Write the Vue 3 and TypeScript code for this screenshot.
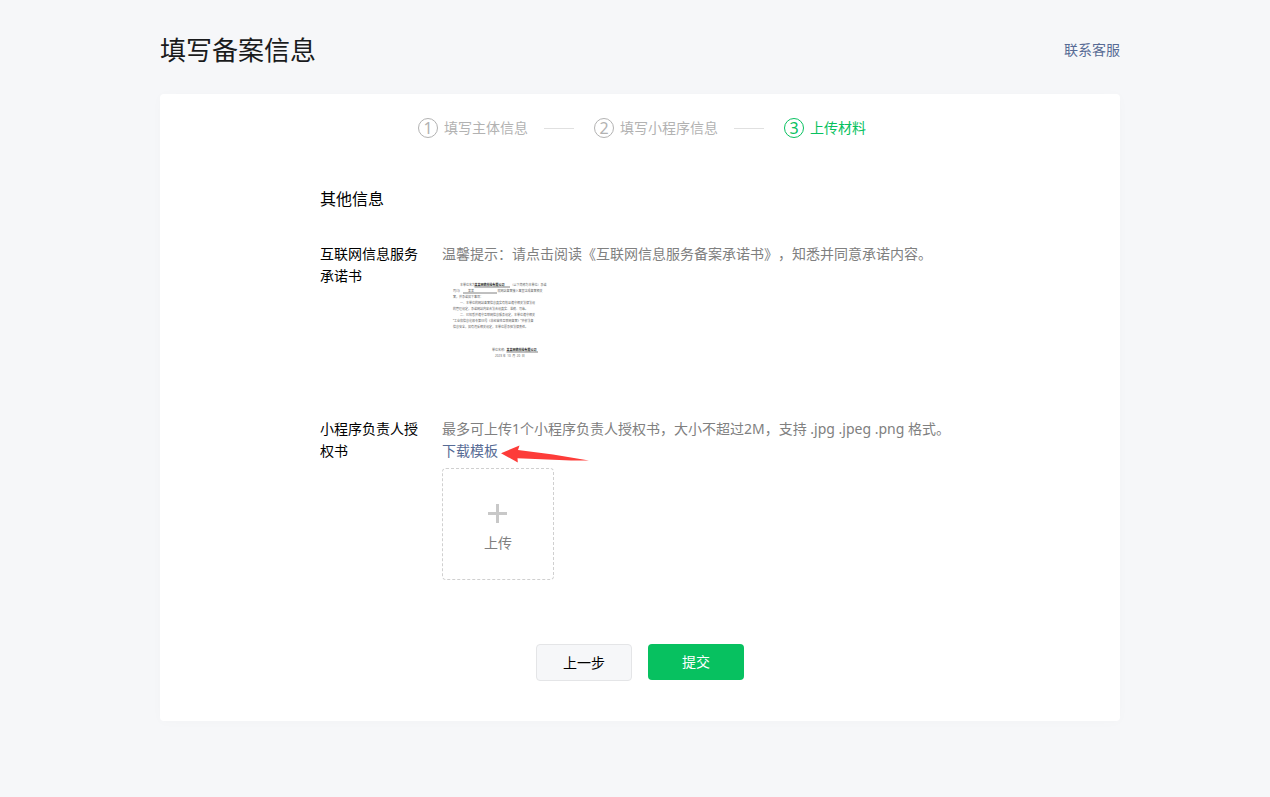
<script setup lang="ts">
interface Step {
  title: string
  active: boolean
}

const steps: Step[] = [
  { title: '填写主体信息', active: false },
  { title: '填写小程序信息', active: false },
  { title: '上传材料', active: true },
]

interface LetterRun {
  x: number
  y: number
  text: string
  bold?: boolean
}

const letter: LetterRun[] = [
  { x: 72, y: 44, text: '本单位名为' },
  { x: 130, y: 44, text: '某某网络科技有限公司', bold: true },
  { x: 274, y: 44, text: '（以下简称为本单位）承诺' },
  { x: 44, y: 68, text: '司)与' },
  { x: 104, y: 68, text: '某某' },
  { x: 222, y: 68, text: '就网站备案接入事宜达成备案相关' },
  { x: 44, y: 92, text: '案，并承诺如下事项：' },
  { x: 72, y: 116, text: '一、本单位的网站备案信息真实有效且遵守相关法律法规' },
  { x: 44, y: 140, text: '的管理规定，承诺网站内容合法合规真实、准确、可靠。' },
  { x: 72, y: 164, text: '二、已知悉并遵守互联网信息服务规定，本单位遵守相关' },
  { x: 44, y: 188, text: '“工业和信息化部令第33号《非经营性互联网备案》”并依法备' },
  { x: 44, y: 212, text: '信息安全，如有违反相关规定，本单位愿承担法律责任。' },
  { x: 200, y: 304, text: '单位名称:' },
  { x: 258, y: 304, text: '某某网络科技有限公司', bold: true },
  { x: 212, y: 328, text: '2023 年  10  月  20  日' },
]
</script>

<template>
  <div class="page">
    <header class="header">
      <h1>填写备案信息</h1>
      <a href="#">联系客服</a>
    </header>

    <main class="card">
      <ol class="steps">
        <li v-for="(step, i) in steps" :key="step.title" class="step" :class="{ active: step.active }">
          <span class="num">{{ i + 1 }}</span>
          <span class="step-title">{{ step.title }}</span>
        </li>
      </ol>

      <form class="form" @submit.prevent>
        <h2>其他信息</h2>

        <div class="row">
          <span class="label">互联网信息服务承诺书</span>
          <div class="content">
            <p>温馨提示：请点击阅读《互联网信息服务备案承诺书》，知悉并同意承诺内容。</p>
            <svg class="letter" viewBox="0 0 448 448" role="img" aria-label="承诺书">
              <text
                v-for="run in letter"
                :key="run.x + '-' + run.y"
                :x="run.x"
                :y="run.y"
                :class="{ bold: run.bold }"
              >{{ run.text }}</text>
              <path d="M130 48H272M84 72H220M258 308H384" />
            </svg>
          </div>
        </div>

        <div class="row">
          <label class="label" for="authorization">小程序负责人授权书</label>
          <div class="content">
            <p>最多可上传1个小程序负责人授权书，大小不超过2M，支持 .jpg .jpeg .png 格式。</p>
            <div class="download">
              <a href="#">下载模板</a>
              <svg class="arrow" viewBox="0 0 90 18" aria-hidden="true">
                <path d="M0 8.2L18.5 0.5L17 5L52 9.5L88 15.6L70 15.5L16.5 13.2L16.8 17.4Z" />
              </svg>
            </div>
            <label class="upload">
              <input id="authorization" type="file" accept=".jpg,.jpeg,.png" />
              <svg class="plus" viewBox="0 0 20 20" aria-hidden="true">
                <path d="M8 0h3v8h8v3h-8v8h-3v-8h-8v-3h8z" />
              </svg>
              <span>上传</span>
            </label>
          </div>
        </div>

        <div class="actions">
          <button type="button" class="btn">上一步</button>
          <button type="submit" class="btn primary">提交</button>
        </div>
      </form>
    </main>
  </div>
</template>

<style>
body {
  margin: 0;
  background: #f6f7f9;
}
</style>

<style scoped>
.page {
  max-width: 960px;
  margin: 0 auto;
  padding: 0 0 76px 10px;
  font: 14px/22px "Noto Sans", "Noto Sans CJK SC", sans-serif;
  text-spacing-trim: space-all;
  color: #000;
}
h1, h2, p, ol {
  margin: 0;
  padding: 0;
  font-weight: 400;
}
a {
  color: #576b95;
  text-decoration: none;
}
.header {
  display: flex;
  align-items: center;
  justify-content: space-between;
  padding: 32px 0 26px;
}
h1 {
  font-size: 26px;
  line-height: 36px;
  color: #1a1b1c;
}
.card {
  padding: 24px 0 40px;
  background: #fff;
  border-radius: 4px;
  box-shadow: 0 1px 12px rgba(0, 0, 0, 0.02);
}
.steps {
  display: flex;
  justify-content: center;
  padding-left: 4px;
  list-style: none;
}
.step {
  display: flex;
  align-items: center;
  height: 20px;
  color: #b2b2b2;
}
.step + .step::before {
  content: "";
  width: 30px;
  height: 1px;
  margin: 0 20px 0 16px;
  background: #e0e0e0;
}
.step.active {
  color: #07c160;
}
.num {
  display: flex;
  align-items: center;
  justify-content: center;
  box-sizing: border-box;
  width: 20px;
  height: 20px;
  margin-right: 6px;
  border: 1px solid currentColor;
  border-radius: 50%;
  font-size: 16px;
  line-height: 18px;
}
.step-title {
  line-height: 20px;
}
.form {
  padding: 0 160px;
}
h2 {
  margin: 49px 0 32px;
  font-size: 16px;
  line-height: 24px;
}
.row {
  display: flex;
  gap: 24px;
}
.row + .row {
  margin-top: 36px;
}
.label {
  flex: none;
  width: 98px;
}
.content {
  flex: 1;
  min-width: 0;
  color: #808080;
}
.letter {
  display: block;
  width: 112px;
  height: 112px;
  margin: 10px 0 -5px;
}
.letter text {
  font-size: 12px;
  fill: #666;
  white-space: pre;
}
.letter .bold {
  font-weight: 700;
  fill: #222;
}
.letter path {
  stroke: #555;
  stroke-width: 3;
}
.download {
  position: relative;
  width: max-content;
}
.arrow {
  position: absolute;
  left: 100%;
  top: 5px;
  width: 90px;
  height: 18px;
  margin-left: 3px;
  fill: #fd3c39;
}
.upload {
  display: flex;
  flex-direction: column;
  align-items: center;
  justify-content: center;
  gap: 8px;
  box-sizing: border-box;
  width: 112px;
  height: 112px;
  margin-top: 6px;
  padding-top: 9px;
  border: 1px dashed #d0d0d0;
  border-radius: 4px;
  cursor: pointer;
}
.upload input {
  position: absolute;
  width: 1px;
  height: 1px;
  opacity: 0;
}
.plus {
  width: 20px;
  height: 20px;
  fill: #c8c8c8;
}
.actions {
  display: flex;
  justify-content: center;
  gap: 16px;
  margin-top: 64px;
}
.btn {
  width: 96px;
  height: 37px;
  padding: 0;
  border: 1px solid #e4e5e7;
  border-radius: 4px;
  background: #f6f7f9;
  color: #000;
  font: inherit;
}
.btn.primary {
  height: 36px;
  border: 0;
  background: #07c160;
  color: #fff;
}
</style>
